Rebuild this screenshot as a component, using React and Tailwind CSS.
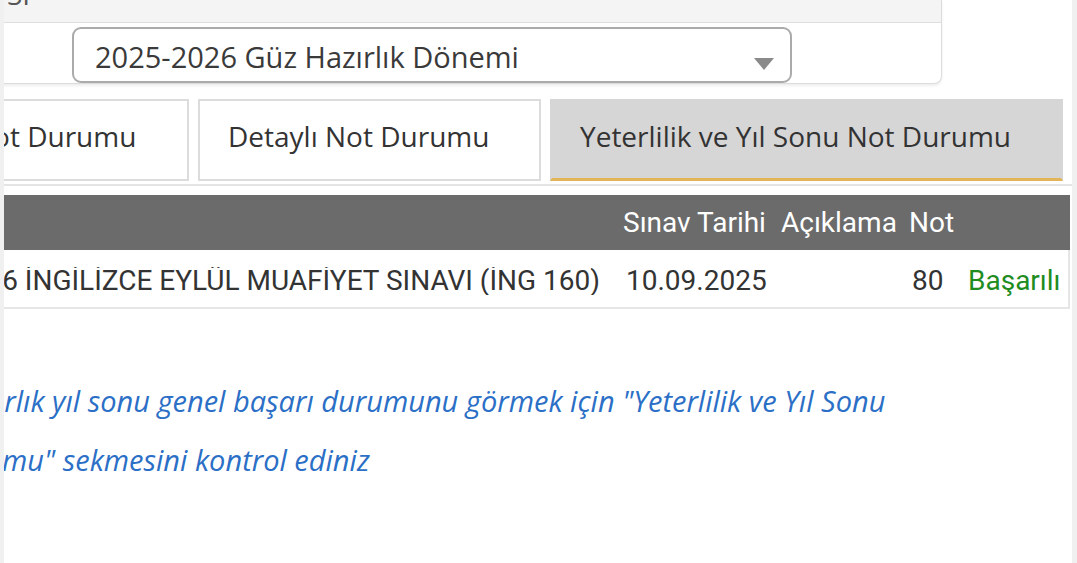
import { useState } from 'react'

const OPEN = { fontFamily: '"Open Sans", "Liberation Sans", sans-serif' }
const ROBOTO = { fontFamily: 'Roboto, "Liberation Sans", sans-serif' }

const TABS = [
  { label: 'Not Durumu', w: 'w-[244px]', pl: 'pl-[25px]' },
  { label: 'Detaylı Not Durumu', w: 'w-[343px]', pl: 'pl-[28px]' },
  { label: 'Yeterlilik ve Yıl Sonu Not Durumu', w: 'w-[513px]', pl: 'pl-[28px]' },
]

const ROWS = [
  {
    ders: '2025-2026 İNGİLİZCE EYLÜL MUAFİYET SINAVI (İNG 160)',
    tarih: '10.09.2025',
    aciklama: '',
    not: '80',
    sonuc: 'Başarılı',
  },
]

function DonemSelect() {
  return (
    <div className="flex h-[56px] w-[720px] items-center justify-between rounded-[9px] border-2 border-[#ababab] bg-white pl-[21px] pr-[16px]">
      <span className="pt-[2px] text-[29px] leading-none text-[#3a3a3a]" style={OPEN}>
        2025-2026 Güz Hazırlık Dönemi
      </span>
      <svg width="20" height="12" viewBox="0 0 20 12" className="mt-[18px]">
        <path d="M0 0 L20 0 L10 12 Z" fill="#8a8a8a" />
      </svg>
    </div>
  )
}

function Tabs() {
  const [active, setActive] = useState(2)
  return (
    <div className="-ml-[59px] mt-[15px] flex gap-[9px]" style={OPEN}>
      {TABS.map((t, i) => (
        <button
          key={t.label}
          onClick={() => setActive(i)}
          className={`flex h-[82px] shrink-0 items-center whitespace-nowrap pb-[8px] text-left text-[28px] leading-none text-[#333] ${t.w} ${t.pl} ${
            i === active
              ? 'border-2 border-b-[3px] border-[#d6d6d6] border-b-[#e3b458] bg-[#d6d6d6]'
              : 'border-2 border-[#dcdcdc] bg-white'
          }`}
        >
          {t.label}
        </button>
      ))}
    </div>
  )
}

function NotTable() {
  return (
    <div className="mt-[9px] w-[1066px] text-[28px] leading-none" style={ROBOTO}>
      <div className="flex h-[55px] items-center bg-[#6b6b6b] text-white">
        <div className="w-[617px] shrink-0" />
        <div className="w-[160px] shrink-0 whitespace-nowrap pl-[2px]">Sınav Tarihi</div>
        <div className="w-[128px] shrink-0 whitespace-nowrap">Açıklama</div>
        <div className="w-[59px] shrink-0">Not</div>
        <div className="flex-1" />
      </div>
      {ROWS.map(r => (
        <div key={r.ders} className="flex h-[59px] items-center border-b-2 border-r-2 border-[#e6e6e6] pt-[5px] text-[#333]">
          <div className="flex w-[617px] shrink-0 justify-end overflow-hidden whitespace-nowrap pr-[21px]">
            <span className="shrink-0">{r.ders}</span>
          </div>
          <div className="w-[160px] shrink-0 pl-[5px]">{r.tarih}</div>
          <div className="w-[128px] shrink-0">{r.aciklama}</div>
          <div className="w-[59px] shrink-0 pl-[3px]">{r.not}</div>
          <div className="flex-1 text-[#1e8c1e]">{r.sonuc}</div>
        </div>
      ))}
    </div>
  )
}

export default function App() {
  return (
    <div className="flex h-[563px] w-[1077px] overflow-hidden bg-white">
      <div className="w-[4px] shrink-0 bg-[#f0f0f0]" />

      <div className="min-w-0 flex-1 overflow-hidden bg-white">
        {/* dönem kartı */}
        <div className="-ml-[20px] w-[958px] rounded-b-[8px] border border-t-0 border-[#dcdcdc] bg-white shadow-[0_2px_3px_rgba(0,0,0,0.07)]">
          <div className="h-[23px] overflow-hidden border-b border-[#dedede] bg-[#f4f4f4] pl-[22px]">
            <div className="-mt-[20px] text-[28px] leading-[28px] text-[#555]" style={OPEN}>SI</div>
          </div>
          <div className="pl-[87px] pt-[4px]">
            <DonemSelect />
          </div>
        </div>

        <Tabs />
        <div className="mt-[3px] h-[2px] bg-[#e4e4e4]" />

        <NotTable />

        <div className="mt-[62px] whitespace-nowrap text-[29px] italic leading-[59px] text-[#2b6fc6]" style={OPEN}>
          <div className="-ml-[56px]">Hazırlık yıl sonu genel başarı durumunu görmek için "Yeterlilik ve Yıl Sonu</div>
          <div className="-ml-[120px]">Not Durumu" sekmesini kontrol ediniz</div>
        </div>
      </div>

      <div className="w-[5px] shrink-0 bg-[#f0f0f0]" />
    </div>
  )
}
